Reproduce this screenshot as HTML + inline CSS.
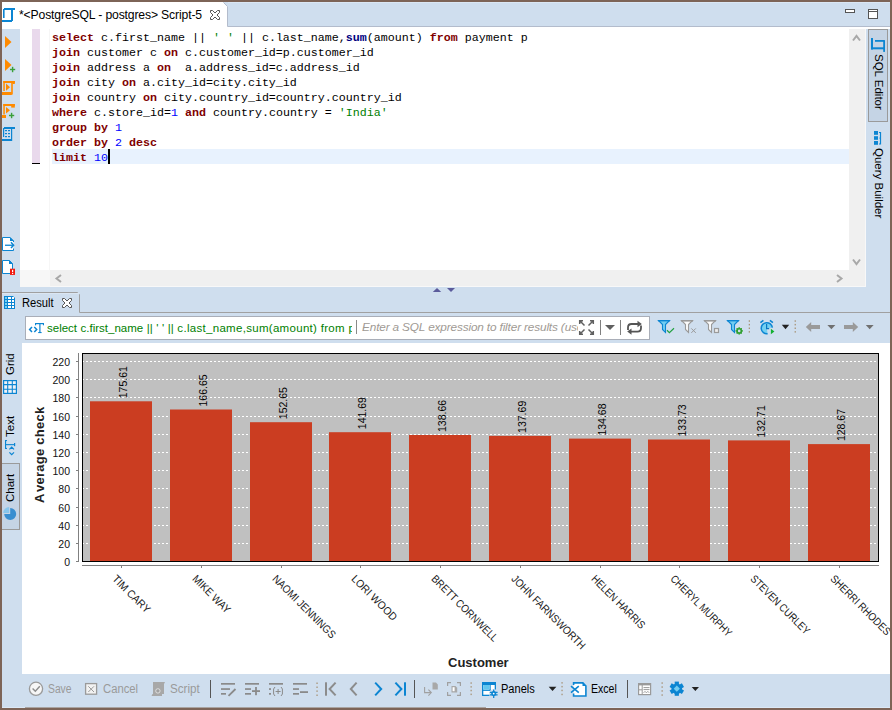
<!DOCTYPE html>
<html><head><meta charset="utf-8">
<style>
*{box-sizing:border-box}
html,body{margin:0;padding:0}
body{width:892px;height:710px;position:relative;overflow:hidden;background:#7d6457;font-family:"Liberation Sans",sans-serif;}
.a{position:absolute}
#win{left:2px;top:2px;width:888px;height:706px;background:#cfdeee}
.code{font-family:"Liberation Mono",monospace;font-size:11.67px;line-height:15px;white-space:pre;color:#000}
.k{color:#800000;font-weight:bold}
.f{color:#000080;font-weight:bold}
.n{color:#0000ff}
.s{color:#008000}
.ui{font-size:11px;color:#000;white-space:pre;line-height:13px}
svg{position:absolute;overflow:visible}
</style></head>
<body>
<div class="a" id="win"></div>

<!-- top editor tab bar -->
<div class="a" style="left:227px;top:26px;width:663px;height:1px;background:#b3bccc"></div>
<div class="a" style="left:228px;top:2px;width:662px;height:1px;background:#dbe7f4"></div>
<div class="a" style="left:2px;top:2px;width:226px;height:27px;background:#fff"></div>
<svg class="a" style="left:0;top:0" width="240" height="30"><polygon points="223,2 229,2 229,8" fill="#cfdeee"/><polyline points="223.5,2.5 227.5,6.5 227.5,26.5 240,26.5" fill="none" stroke="#b3bccc" stroke-width="1"/><rect x="228" y="2" width="12" height="1" fill="#dbe7f4"/></svg>
<div class="a" style="left:2px;top:27px;width:888px;height:2px;background:#fff"></div>
<div class="a ui" style="left:19px;top:8px;font-size:12.2px;line-height:14px;color:#000;letter-spacing:-0.15px">*&lt;PostgreSQL - postgres&gt; Script-5</div>

<!-- editor -->
<div class="a" style="left:20px;top:29px;width:829px;height:241px;background:#fff"></div>
<div class="a" style="left:32px;top:29px;width:8px;height:134px;background:#e9d9ec"></div>
<div class="a" style="left:32px;top:163px;width:8px;height:1px;background:#000"></div>
<div class="a" style="left:49px;top:29px;width:1px;height:241px;background:#f6f6f6"></div>
<div class="a" style="left:52px;top:149px;width:797px;height:15px;background:#e8f2fe"></div>
<div class="a code" style="left:52px;top:31px"><span class="k">select</span> c.first_name || <span class="s">' '</span> || c.last_name,<span class="f">sum</span>(amount) <span class="k">from</span> payment p
<span class="k">join</span> customer c <span class="k">on</span> c.customer_id=p.customer_id
<span class="k">join</span> address a <span class="k">on</span>  a.address_id=c.address_id
<span class="k">join</span> city <span class="k">on</span> a.city_id=city.city_id
<span class="k">join</span> country <span class="k">on</span> city.country_id=country.country_id
<span class="k">where</span> c.store_id=<span class="n">1</span> <span class="k">and</span> country.country = <span class="s">'India'</span>
<span class="k">group</span> <span class="k">by</span> <span class="n">1</span>
<span class="k">order</span> <span class="k">by</span> <span class="n">2</span> <span class="k">desc</span>
<span class="k">limit</span> <span class="n">10</span></div>
<div class="a" style="left:108px;top:149px;width:2px;height:15px;background:#000"></div>
<!-- scrollbars -->
<div class="a" style="left:849px;top:29px;width:17px;height:258px;background:#f0f0f0"></div>
<div class="a" style="left:20px;top:270px;width:829px;height:17px;background:#f0f0f0"></div>
<div class="a" style="left:20px;top:270px;width:30px;height:17px;background:#f7f7f7"></div>
<div class="a" style="left:865px;top:29px;width:1px;height:258px;background:#f8f8f8"></div>
<div class="a" style="left:50px;top:286px;width:816px;height:1px;background:#f8f8f8"></div>

<!-- right vertical tabs -->
<div class="a" style="left:868px;top:29px;width:20px;height:93px;background:#c5d4e5;border:1px solid #9a9a9a"></div>
<div class="a ui" style="left:885px;top:54px;transform-origin:0 0;transform:rotate(90deg);font-size:11.5px">SQL Editor</div>
<div class="a ui" style="left:885px;top:148px;transform-origin:0 0;transform:rotate(90deg);font-size:11.5px">Query Builder</div>

<!-- result tab -->
<svg class="a" style="left:0;top:285px" width="892" height="30"><polyline points="2,7.5 77.5,7.5 79.5,9.5 79.5,27.5 890,27.5" fill="none" stroke="#a0a0a0" stroke-width="1"/><rect x="2" y="8" width="77" height="1" fill="#dbe6f2"/></svg>
<div class="a ui" style="left:22px;top:297px;font-size:12px;transform-origin:0 0;transform:scaleX(0.93)">Result</div>

<!-- filter box -->
<div class="a" style="left:25px;top:316px;width:625px;height:24px;background:#fff;border:1px solid #a9aeb8"></div>
<div class="a ui" style="left:47px;top:321px;font-size:11.5px;line-height:14px;color:#008000;width:305px;overflow:hidden"><span style="word-spacing:0.36px">select c.first_name || ' ' || </span><span style="letter-spacing:0.3px">c.last_name,sum(amount) from payment p</span></div>
<div class="a" style="left:356px;top:320px;width:1px;height:14px;background:#8a8a8a"></div>
<div class="a ui" style="left:362px;top:320px;font-size:11.8px;letter-spacing:-0.15px;line-height:14px;color:#a09a94;font-style:italic;width:216px;overflow:hidden">Enter a SQL expression to filter results (use Ctrl+Space)</div>
<div class="a" style="left:600px;top:320px;width:1px;height:15px;background:#808080"></div>
<div class="a" style="left:620px;top:320px;width:1px;height:15px;background:#808080"></div>

<!-- left vertical tabs -->
<div class="a" style="left:2px;top:463px;width:18px;height:67px;background:#c5d4e5;border:1px solid #9a9a9a;border-left:none"></div>
<div class="a ui" style="left:4px;top:375px;transform-origin:0 0;transform:rotate(-90deg);font-size:11.5px">Grid</div>
<div class="a ui" style="left:4px;top:437px;transform-origin:0 0;transform:rotate(-90deg);font-size:11.5px">Text</div>
<div class="a ui" style="left:4px;top:502px;transform-origin:0 0;transform:rotate(-90deg);font-size:11.5px">Chart</div>

<!-- chart area -->
<div class="a" style="left:22px;top:343px;width:868px;height:331px;background:#fff"></div>
<div id="chart"><svg class="a" style="left:0;top:0" width="892" height="710" viewBox="0 0 892 710"><defs><clipPath id="cc"><rect x="22" y="343" width="868" height="331"/></clipPath></defs><g clip-path="url(#cc)">
<rect x="82.5" y="353.5" width="796" height="208" fill="#c0c0c0"/>
<line x1="82" y1="543.5" x2="878" y2="543.5" stroke="#fff" stroke-width="1" stroke-dasharray="2 2"/>
<line x1="82" y1="525.5" x2="878" y2="525.5" stroke="#fff" stroke-width="1" stroke-dasharray="2 2"/>
<line x1="82" y1="507.5" x2="878" y2="507.5" stroke="#fff" stroke-width="1" stroke-dasharray="2 2"/>
<line x1="82" y1="488.5" x2="878" y2="488.5" stroke="#fff" stroke-width="1" stroke-dasharray="2 2"/>
<line x1="82" y1="470.5" x2="878" y2="470.5" stroke="#fff" stroke-width="1" stroke-dasharray="2 2"/>
<line x1="82" y1="452.5" x2="878" y2="452.5" stroke="#fff" stroke-width="1" stroke-dasharray="2 2"/>
<line x1="82" y1="434.5" x2="878" y2="434.5" stroke="#fff" stroke-width="1" stroke-dasharray="2 2"/>
<line x1="82" y1="416.5" x2="878" y2="416.5" stroke="#fff" stroke-width="1" stroke-dasharray="2 2"/>
<line x1="82" y1="397.5" x2="878" y2="397.5" stroke="#fff" stroke-width="1" stroke-dasharray="2 2"/>
<line x1="82" y1="379.5" x2="878" y2="379.5" stroke="#fff" stroke-width="1" stroke-dasharray="2 2"/>
<line x1="82" y1="361.5" x2="878" y2="361.5" stroke="#fff" stroke-width="1" stroke-dasharray="2 2"/>
<rect x="90" y="401.3" width="62" height="159.7" fill="#cb3d21"/>
<rect x="170" y="409.5" width="62" height="151.5" fill="#cb3d21"/>
<rect x="250" y="422.2" width="62" height="138.8" fill="#cb3d21"/>
<rect x="329" y="432.2" width="62" height="128.8" fill="#cb3d21"/>
<rect x="409" y="435.0" width="62" height="126.0" fill="#cb3d21"/>
<rect x="489" y="435.9" width="62" height="125.1" fill="#cb3d21"/>
<rect x="569" y="438.6" width="62" height="122.4" fill="#cb3d21"/>
<rect x="648" y="439.5" width="62" height="121.5" fill="#cb3d21"/>
<rect x="728" y="440.4" width="62" height="120.6" fill="#cb3d21"/>
<rect x="808" y="444.1" width="62" height="116.9" fill="#cb3d21"/>
<rect x="82.5" y="353.5" width="796" height="208" fill="none" stroke="#000" stroke-width="1"/>
<line x1="78.5" y1="353" x2="78.5" y2="562" stroke="#808080" stroke-width="1"/>
<line x1="76" y1="561.5" x2="78" y2="561.5" stroke="#808080" stroke-width="1"/>
<text x="70" y="566.0" text-anchor="end" font-size="10.5" fill="#111">0</text>
<line x1="76" y1="543.5" x2="78" y2="543.5" stroke="#808080" stroke-width="1"/>
<text x="70" y="548.0" text-anchor="end" font-size="10.5" fill="#111">20</text>
<line x1="76" y1="525.5" x2="78" y2="525.5" stroke="#808080" stroke-width="1"/>
<text x="70" y="530.0" text-anchor="end" font-size="10.5" fill="#111">40</text>
<line x1="76" y1="507.5" x2="78" y2="507.5" stroke="#808080" stroke-width="1"/>
<text x="70" y="512.0" text-anchor="end" font-size="10.5" fill="#111">60</text>
<line x1="76" y1="488.5" x2="78" y2="488.5" stroke="#808080" stroke-width="1"/>
<text x="70" y="493.0" text-anchor="end" font-size="10.5" fill="#111">80</text>
<line x1="76" y1="470.5" x2="78" y2="470.5" stroke="#808080" stroke-width="1"/>
<text x="70" y="475.0" text-anchor="end" font-size="10.5" fill="#111">100</text>
<line x1="76" y1="452.5" x2="78" y2="452.5" stroke="#808080" stroke-width="1"/>
<text x="70" y="457.0" text-anchor="end" font-size="10.5" fill="#111">120</text>
<line x1="76" y1="434.5" x2="78" y2="434.5" stroke="#808080" stroke-width="1"/>
<text x="70" y="439.0" text-anchor="end" font-size="10.5" fill="#111">140</text>
<line x1="76" y1="416.5" x2="78" y2="416.5" stroke="#808080" stroke-width="1"/>
<text x="70" y="421.0" text-anchor="end" font-size="10.5" fill="#111">160</text>
<line x1="76" y1="397.5" x2="78" y2="397.5" stroke="#808080" stroke-width="1"/>
<text x="70" y="402.0" text-anchor="end" font-size="10.5" fill="#111">180</text>
<line x1="76" y1="379.5" x2="78" y2="379.5" stroke="#808080" stroke-width="1"/>
<text x="70" y="384.0" text-anchor="end" font-size="10.5" fill="#111">200</text>
<line x1="76" y1="361.5" x2="78" y2="361.5" stroke="#808080" stroke-width="1"/>
<text x="70" y="366.0" text-anchor="end" font-size="10.5" fill="#111">220</text>
<line x1="82" y1="565.5" x2="879" y2="565.5" stroke="#808080" stroke-width="1"/>
<line x1="121.5" y1="565" x2="121.5" y2="568" stroke="#808080" stroke-width="1"/>
<text transform="translate(111.7,579.5) rotate(45)" font-size="11" fill="#1a1a1a" textLength="48.4" lengthAdjust="spacingAndGlyphs">TIM CARY</text>
<line x1="201.5" y1="565" x2="201.5" y2="568" stroke="#808080" stroke-width="1"/>
<text transform="translate(191.7,579.5) rotate(45)" font-size="11" fill="#1a1a1a" textLength="48.6" lengthAdjust="spacingAndGlyphs">MIKE WAY</text>
<line x1="281.5" y1="565" x2="281.5" y2="568" stroke="#808080" stroke-width="1"/>
<text transform="translate(271.7,579.5) rotate(45)" font-size="11" fill="#1a1a1a" textLength="84.3" lengthAdjust="spacingAndGlyphs">NAOMI JENNINGS</text>
<line x1="360.5" y1="565" x2="360.5" y2="568" stroke="#808080" stroke-width="1"/>
<text transform="translate(350.7,579.5) rotate(45)" font-size="11" fill="#1a1a1a" textLength="59.4" lengthAdjust="spacingAndGlyphs">LORI WOOD</text>
<line x1="440.5" y1="565" x2="440.5" y2="568" stroke="#808080" stroke-width="1"/>
<text transform="translate(430.7,579.5) rotate(45)" font-size="11" fill="#1a1a1a" textLength="88.8" lengthAdjust="spacingAndGlyphs">BRETT CORNWELL</text>
<line x1="520.5" y1="565" x2="520.5" y2="568" stroke="#808080" stroke-width="1"/>
<text transform="translate(510.7,579.5) rotate(45)" font-size="11" fill="#1a1a1a" textLength="99.6" lengthAdjust="spacingAndGlyphs">JOHN FARNSWORTH</text>
<line x1="600.5" y1="565" x2="600.5" y2="568" stroke="#808080" stroke-width="1"/>
<text transform="translate(590.7,579.5) rotate(45)" font-size="11" fill="#1a1a1a" textLength="70.7" lengthAdjust="spacingAndGlyphs">HELEN HARRIS</text>
<line x1="679.5" y1="565" x2="679.5" y2="568" stroke="#808080" stroke-width="1"/>
<text transform="translate(669.7,579.5) rotate(45)" font-size="11" fill="#1a1a1a" textLength="81.9" lengthAdjust="spacingAndGlyphs">CHERYL MURPHY</text>
<line x1="759.5" y1="565" x2="759.5" y2="568" stroke="#808080" stroke-width="1"/>
<text transform="translate(749.7,579.5) rotate(45)" font-size="11" fill="#1a1a1a" textLength="78.7" lengthAdjust="spacingAndGlyphs">STEVEN CURLEY</text>
<line x1="839.5" y1="565" x2="839.5" y2="568" stroke="#808080" stroke-width="1"/>
<text transform="translate(829.7,579.5) rotate(45)" font-size="11" fill="#1a1a1a" textLength="79.9" lengthAdjust="spacingAndGlyphs">SHERRI RHODES</text>
<text transform="translate(127.2,398.3) rotate(-90)" font-size="10.5" fill="#000">175.61</text>
<text transform="translate(206.9,406.5) rotate(-90)" font-size="10.5" fill="#000">166.65</text>
<text transform="translate(286.7,419.2) rotate(-90)" font-size="10.5" fill="#000">152.65</text>
<text transform="translate(366.4,429.2) rotate(-90)" font-size="10.5" fill="#000">141.69</text>
<text transform="translate(446.2,432.0) rotate(-90)" font-size="10.5" fill="#000">138.66</text>
<text transform="translate(526.0,432.9) rotate(-90)" font-size="10.5" fill="#000">137.69</text>
<text transform="translate(605.7,435.6) rotate(-90)" font-size="10.5" fill="#000">134.68</text>
<text transform="translate(685.5,436.5) rotate(-90)" font-size="10.5" fill="#000">133.73</text>
<text transform="translate(765.2,437.4) rotate(-90)" font-size="10.5" fill="#000">132.71</text>
<text transform="translate(845.0,441.1) rotate(-90)" font-size="10.5" fill="#000">128.67</text>
<text transform="translate(44,503) rotate(-90)" font-size="13" font-weight="bold" fill="#222" style="font-kerning:none">A<tspan dx="1.6" letter-spacing="0.25">verage check</tspan></text>
<text x="448" y="667" font-size="13" font-weight="bold" fill="#222">Customer</text>
</g></svg></div>

<!-- bottom toolbar -->
<div class="a" style="left:2px;top:707px;width:23px;height:1px;background:#dce8f5"></div>
<div class="a" style="left:25px;top:707px;width:461px;height:1px;background:#a9a4a2"></div>
<div class="a" style="left:486px;top:707px;width:404px;height:1px;background:#dce8f5"></div>

<div class="a ui" style="left:48px;top:683px;color:#9a9a9a;font-size:12px;transform-origin:0 0;transform:scaleX(0.86)">Save</div>
<div class="a ui" style="left:103px;top:683px;color:#9a9a9a;font-size:12px;transform-origin:0 0;transform:scaleX(0.94)">Cancel</div>
<div class="a ui" style="left:170px;top:683px;color:#9a9a9a;font-size:12px;transform-origin:0 0;transform:scaleX(0.97)">Script</div>
<div class="a ui" style="left:501px;top:683px;font-size:12px;transform-origin:0 0;transform:scaleX(0.92)">Panels</div>
<div class="a ui" style="left:591px;top:683px;font-size:12px;transform-origin:0 0;transform:scaleX(0.88)">Excel</div>

<svg class="a" style="left:0;top:0" width="892" height="710" viewBox="0 0 892 710">
<g fill="#0c85d2"><rect x="4" y="8" width="11" height="2"/><rect x="3" y="9" width="1.6" height="9"/><rect x="11" y="9" width="2" height="12"/><rect x="2" y="20" width="10" height="2"/></g>
<path transform="translate(210,10)" d="M0.5,0.5 H2.5 L5,3 L7.5,0.5 H9.5 V2.5 L7,5 L9.5,7.5 V9.5 H7.5 L5,7 L2.5,9.5 H0.5 V7.5 L3,5 L0.5,2.5 Z" fill="#fff" stroke="#555" stroke-width="1" stroke-linejoin="miter"/>
<rect x="845.5" y="9.5" width="9" height="3" fill="#fff" stroke="#555"/>
<rect x="868.5" y="9.5" width="9" height="9" fill="#fff" stroke="#555"/><line x1="868" y1="11.5" x2="878" y2="11.5" stroke="#555"/>
<polygon points="5,36 11.5,42 5,48" fill="#ff8a00"/>
<polygon points="5,59 11.5,65 5,71" fill="#ff8a00"/>
<rect x="10" y="68.8" width="5.2" height="1.4" fill="#3aa03a"/><rect x="11.9" y="66.8" width="1.4" height="5.4" fill="#3aa03a"/>
<g fill="#ff8a00"><rect x="3.3" y="81" width="11.5" height="2"/><rect x="12.5" y="81" width="2.3" height="3"/><rect x="3.3" y="81" width="1.5" height="10"/><rect x="11.2" y="81" width="1.6" height="13.5"/><rect x="2" y="92" width="9.8" height="3"/><polygon points="6,83.6 10,87.2 6,90.7"/></g>
<g fill="#ff8a00"><rect x="3.3" y="104" width="11.5" height="2"/><rect x="11.2" y="104" width="3.6" height="3.6"/><rect x="3.3" y="104" width="1.5" height="10.5"/><rect x="2" y="115" width="4" height="3"/><polygon points="6,107 10,110.2 6,113.5"/></g>
<rect x="9" y="114.8" width="5.2" height="1.4" fill="#3aa03a"/><rect x="10.9" y="112.8" width="1.4" height="5.4" fill="#3aa03a"/>
<g fill="#0c85d2"><rect x="4" y="127" width="11" height="2"/><rect x="3" y="128" width="1.2" height="9"/><rect x="11" y="128" width="1.2" height="13"/><rect x="2" y="139" width="9.5" height="2"/><rect x="5" y="130" width="2" height="1.2"/><rect x="5" y="133" width="2" height="1.2"/><rect x="5" y="136" width="2" height="1.2"/><rect x="8" y="130" width="2" height="1.2"/><rect x="8" y="133" width="2" height="1.2"/><rect x="8" y="136" width="2" height="1.2"/></g>
<path d="M2.5,237.5 H10 L13.5,241 V250.5 H2.5 Z" fill="#fff" stroke="none"/><path d="M13.5,242 V241 L10,237.5 H2.5 V250.5 H13.5 V248.5" fill="none" stroke="#0c85d2"/><polygon points="10,237 14,241 10,241" fill="#0c85d2"/>
<rect x="5" y="244.6" width="8" height="1.3" fill="#0c85d2"/><polyline points="11,242.3 13.6,245.2 11,248.1" fill="none" stroke="#0c85d2" stroke-width="1.5"/>
<path d="M2.5,260.5 H9.5 L12.5,263.5 V273.5 H2.5 Z" fill="#fff" stroke="#0c85d2"/><polygon points="9,260 13,264 9,264" fill="#0c85d2"/>
<rect x="10" y="268.7" width="5" height="6.2" fill="#f01a10"/><rect x="12" y="269.8" width="1.2" height="2.4" fill="#fff"/><rect x="12" y="273" width="1.2" height="1" fill="#fff"/>
<g fill="none" stroke="#a8a8a8" stroke-width="2"><polyline points="853,40.5 856.5,36 860,40.5"/><polyline points="853,259.5 856.5,264 860,259.5"/><polyline points="61,275 56.5,278.5 61,282"/><polyline points="837,275 841.5,278.5 837,282"/></g>
<polygon points="432.8,292 437,288 441.2,292" fill="#5b5b9b"/><polygon points="447,288 455,288 451,292" fill="#5b5b9b"/>
<g fill="#0c85d2"><rect x="871" y="38" width="2" height="11.5"/><rect x="871" y="47.3" width="14" height="2"/><rect x="883.2" y="40.3" width="1.8" height="11.6"/><rect x="875" y="40" width="9.6" height="1.8"/></g>
<g fill="#0c85d2"><rect x="874" y="131" width="4" height="3.8"/><rect x="874" y="136.2" width="4" height="3.6"/><rect x="874" y="141" width="4" height="3.8"/></g><path d="M879,132.5 H880.5 V144 H879 M880.5,138.2 H879.5" fill="none" stroke="#0c85d2" stroke-width="1.2"/>
<path d="M4,296 H13 L15,298 V309 H4 Z" fill="#0c85d2"/><rect x="5" y="297" width="2" height="2" fill="#74d2f4"/><rect x="8" y="297" width="3" height="2" fill="#fff"/><rect x="12" y="297" width="2" height="2" fill="#fff"/><rect x="5" y="300" width="2" height="2" fill="#74d2f4"/><rect x="8" y="300" width="3" height="2" fill="#fff"/><rect x="12" y="300" width="2" height="2" fill="#fff"/><rect x="5" y="303" width="2" height="2" fill="#74d2f4"/><rect x="8" y="303" width="3" height="2" fill="#fff"/><rect x="12" y="303" width="2" height="2" fill="#fff"/><rect x="5" y="306" width="2" height="2" fill="#74d2f4"/><rect x="8" y="306" width="3" height="2" fill="#fff"/><rect x="12" y="306" width="2" height="2" fill="#fff"/>
<path transform="translate(62,298)" d="M0.5,0.5 H2.5 L5,3 L7.5,0.5 H9.5 V2.5 L7,5 L9.5,7.5 V9.5 H7.5 L5,7 L2.5,9.5 H0.5 V7.5 L3,5 L0.5,2.5 Z" fill="#fff" stroke="#555" stroke-width="1" stroke-linejoin="miter"/>
<g fill="none" stroke="#0c85d2" stroke-width="1.5"><polyline points="32,327 29.6,329.5 32,332"/><polyline points="34.3,327 36.7,329.5 34.3,332"/></g>
<g fill="#0c85d2"><rect x="35" y="323" width="9" height="1.2"/><rect x="35" y="323" width="1.1" height="2.3"/><rect x="42.9" y="323" width="1.1" height="2.3"/><rect x="39.3" y="323" width="1.2" height="10"/><rect x="38.2" y="332" width="3.4" height="1.1"/></g>
<g fill="none" stroke="#606060" stroke-width="1.5"><path d="M579.7,324 V320.7 H583 M580.5,321.5 L584.5,325.5 M590,320.7 H593.3 V324 M592.5,321.5 L588.5,325.5 M579.7,331 V334.3 H583 M580.5,333.5 L584.5,329.5 M593.3,331 V334.3 H590 M592.5,333.5 L588.5,329.5"/></g>
<polygon points="605,325 615,325 610,330" fill="#606060"/>
<g fill="none" stroke="#555" stroke-width="1.8"><path d="M628,330 V327.5 Q628,324 631.5,324 H638.5"/><path d="M641,325.5 V328 Q641,331.6 637.5,331.6 H630.5"/></g><polygon points="637.5,320.8 641.8,324 637.5,327.2" fill="#555"/><polygon points="631.5,328.4 627.2,331.6 631.5,334.8" fill="#555"/>
<path d="M658.5,320.5 H669.5 L665.5,324.5 V332.5 L662.5,329.5 V324.5 Z" fill="#72cdf2" stroke="#0c85d2" stroke-width="1.1"/><rect x="658" y="320" width="12" height="1.4" fill="#0c85d2"/><polyline points="667,330.3 669.4,332.6 674,328.3" fill="none" stroke="#20a040" stroke-width="1.2"/>
<path d="M681.5,320.5 H692.5 L688.5,324.5 V332.5 L685.5,329.5 V324.5 Z" fill="#fbfbfb" stroke="#9a9a9a" stroke-width="1.1"/><rect x="681" y="320" width="12" height="1.6" fill="#9a9a9a"/><path d="M691.3,328.4 L695.8,332.9 M695.8,328.4 L691.3,332.9" stroke="#9a9a9a" stroke-width="1"/>
<path d="M704.5,320.5 H715.5 L711.5,324.5 V332.5 L708.5,329.5 V324.5 Z" fill="#fbfbfb" stroke="#9a9a9a" stroke-width="1.1"/><rect x="704" y="320" width="12" height="1.6" fill="#9a9a9a"/><rect x="714.5" y="328.5" width="4" height="4" fill="#eee" stroke="#9a9a9a" stroke-width="1.2"/>
<path d="M727.5,320.5 H738.5 L734.5,324.5 V332.5 L731.5,329.5 V324.5 Z" fill="#72cdf2" stroke="#0c85d2" stroke-width="1.1"/><rect x="727" y="320" width="12" height="1.4" fill="#0c85d2"/><circle cx="739.2" cy="330.9" r="2.1" fill="none" stroke="#30a030" stroke-width="1.6"/><rect x="741.35" y="330.15" width="1.5" height="1.5" fill="#30a030"/><rect x="740.50" y="332.20" width="1.5" height="1.5" fill="#30a030"/><rect x="738.45" y="333.05" width="1.5" height="1.5" fill="#30a030"/><rect x="736.40" y="332.20" width="1.5" height="1.5" fill="#30a030"/><rect x="735.55" y="330.15" width="1.5" height="1.5" fill="#30a030"/><rect x="736.40" y="328.10" width="1.5" height="1.5" fill="#30a030"/><rect x="738.45" y="327.25" width="1.5" height="1.5" fill="#30a030"/><rect x="740.50" y="328.10" width="1.5" height="1.5" fill="#30a030"/>
<rect x="748.6999999999999" y="320.3" width="1.3" height="1.5" fill="#a8957a"/><rect x="748.6999999999999" y="323.90000000000003" width="1.3" height="1.5" fill="#a8957a"/><rect x="748.6999999999999" y="327.5" width="1.3" height="1.5" fill="#a8957a"/><rect x="748.6999999999999" y="331.1" width="1.3" height="1.5" fill="#a8957a"/>
<rect x="794.6" y="320.3" width="1.3" height="1.5" fill="#a8957a"/><rect x="794.6" y="323.90000000000003" width="1.3" height="1.5" fill="#a8957a"/><rect x="794.6" y="327.5" width="1.3" height="1.5" fill="#a8957a"/><rect x="794.6" y="331.1" width="1.3" height="1.5" fill="#a8957a"/>
<path d="M766.8,328.2 L772.4,327.6 A5.6,5.6 0 1 0 767.6,333.8 Z" fill="#74d0f2"/><path d="M772.4,327.6 A5.6,5.6 0 1 0 767.6,333.8" fill="none" stroke="#0c85d2" stroke-width="1.5"/><path d="M760.4,322.6 L763.4,320.3 M769.9,320.3 L772.9,322.6" fill="none" stroke="#0c85d2" stroke-width="1.6"/><polyline points="766.6,324 766.6,328.6 769.2,328.6" fill="none" stroke="#0a76c0" stroke-width="1.2"/><polygon points="770.9,328.8 774.4,331.5 770.9,334.3" fill="#12b030"/>
<polygon points="781.8,324.8 789.2,324.8 785.5,329.2" fill="#222"/>
<g fill="#9a9a9a"><polygon points="805.8,327 811.2,322 811.2,332"/><rect x="810.5" y="325" width="9.5" height="4"/><polygon points="858.2,327 852.8,322 852.8,332"/><rect x="844" y="325" width="9.5" height="4"/></g>
<g fill="#707070"><polygon points="827.4,325 835.4,325 831.4,329.2"/><polygon points="865.8,325 873.6,325 869.7,329.2"/></g>
<rect x="3.6" y="380.6" width="12.8" height="12.8" fill="#eef2f7" stroke="#0c85d2" stroke-width="1.2"/><path d="M7.7,380 V394 M12.3,380 V394 M3,384.6 H17 M3,389.3 H17" stroke="#0c85d2" stroke-width="1.1"/>
<g fill="#0c85d2"><rect x="5" y="440" width="1.1" height="9"/><rect x="5" y="440" width="2" height="1.1"/><rect x="5" y="447.9" width="2" height="1.1"/><rect x="5" y="444.1" width="10" height="1.1"/><rect x="14" y="443" width="1.2" height="3.2"/></g><g fill="none" stroke="#0c85d2" stroke-width="1.2"><polyline points="9.4,449.4 11.7,447.2 14,449.4"/><polyline points="9.4,452.3 11.7,454.6 14,452.3"/></g>
<path d="M10.2,508 A6,6 0 1 1 4.2,514 H10.2 Z" fill="#3a8fd0"/><path d="M9.2,507 V513 H3.2 A6,6 0 0 1 9.2,507 Z" fill="#88c6ec"/>
<circle cx="36" cy="688.8" r="6.6" fill="#f6f6f6" stroke="#9a9a9a" stroke-width="1.3"/><polyline points="32.6,688.6 35.3,691.3 39.8,686.2" fill="none" stroke="#8c8c8c" stroke-width="1.4"/>
<rect x="85.6" y="683.6" width="11" height="10.6" fill="#f2f2f2" stroke="#9a9a9a" stroke-width="1.3"/><path d="M88.3,686.3 L94,692 M94,686.3 L88.3,692" stroke="#9a9a9a" stroke-width="1"/>
<path d="M153,682 H165 L164,684 V694 H162 V696 H151.5 L152.5,694 H153 Z" fill="#a8a8a8"/><circle cx="157.9" cy="690.9" r="2.2" fill="#a0a0a0" stroke="#e4e4e4" stroke-width="0.9"/>
<rect x="221" y="683" width="14" height="1.7" fill="#8a8a8a"/><rect x="221" y="688.2" width="9" height="1.7" fill="#8a8a8a"/><rect x="221" y="693" width="5" height="1.7" fill="#8a8a8a"/><line x1="228.5" y1="695.8" x2="235.5" y2="689" stroke="#8a8a8a" stroke-width="1.8"/>
<rect x="245" y="683" width="14" height="1.7" fill="#8a8a8a"/><rect x="245" y="688.2" width="6" height="1.7" fill="#8a8a8a"/><rect x="245" y="693" width="6" height="1.7" fill="#8a8a8a"/><rect x="252" y="690.2" width="8" height="1.8" fill="#8a8a8a"/><rect x="255.1" y="687" width="1.8" height="8.2" fill="#8a8a8a"/>
<rect x="269" y="683" width="14" height="1.7" fill="#8a8a8a"/><rect x="269" y="688.2" width="2" height="1.7" fill="#8a8a8a"/><rect x="269" y="693" width="2" height="1.7" fill="#8a8a8a"/><g fill="none" stroke="#8a8a8a" stroke-width="1"><polyline points="275,687 273.6,689 273.6,694 275,696"/><polyline points="281,687 282.4,689 282.4,694 281,696"/></g><rect x="275.6" y="691" width="5" height="1" fill="#8a8a8a"/><rect x="277.6" y="689" width="1" height="5" fill="#8a8a8a"/>
<rect x="293" y="683" width="14" height="1.7" fill="#8a8a8a"/><rect x="293" y="688.2" width="6" height="1.7" fill="#8a8a8a"/><rect x="293" y="693" width="6" height="1.7" fill="#8a8a8a"/><rect x="300" y="691.2" width="8" height="1.8" fill="#8a8a8a"/>
<rect x="316.4" y="682.5" width="1.3" height="1.5" fill="#a8957a"/><rect x="316.4" y="686.5" width="1.3" height="1.5" fill="#a8957a"/><rect x="316.4" y="690.4" width="1.3" height="1.5" fill="#a8957a"/><rect x="316.4" y="694.5" width="1.3" height="1.5" fill="#a8957a"/>
<rect x="325" y="682.3" width="2" height="13.4" fill="#8c8c8c"/><g fill="none" stroke-width="2"><polyline points="335.6,682.6 329.6,689 335.6,695.4" stroke="#8c8c8c"/><polyline points="356.6,682.6 350.8,689 356.6,695.4" stroke="#8c8c8c"/><polyline points="375.2,682.6 381.2,689 375.2,695.4" stroke="#0c85d2"/><polyline points="395.4,682.6 401.4,689 395.4,695.4" stroke="#0c85d2"/></g><rect x="404" y="682.3" width="2" height="13.4" fill="#0c85d2"/>
<g fill="none" stroke="#a0a0a0" stroke-width="1.1"><polyline points="424.6,687 424.6,692.6 431,692.6"/><polyline points="428.4,689.6 431.3,692.6 428.4,695.6"/></g><path d="M432.5,682.6 H436 L437.8,684.4 V689.4 H432.5 Z" fill="#a8a8a8"/>
<g fill="none" stroke="#a0a0a0" stroke-width="1.2"><path d="M447.6,686 V682.6 H451 M457,682.6 H460.4 V686 M447.6,692 V695.4 H451 M457,695.4 H460.4 V692"/></g><path d="M451.5,686 H455.5 L457.2,687.7 V692.5 H451.5 Z" fill="#a8a8a8"/><rect x="452.6" y="687.2" width="2" height="4" fill="#fff"/>
<rect x="470.5" y="682.3" width="1.3" height="1.5" fill="#a8957a"/><rect x="470.5" y="686.0999999999999" width="1.3" height="1.5" fill="#a8957a"/><rect x="470.5" y="689.8" width="1.3" height="1.5" fill="#a8957a"/><rect x="470.5" y="693.5999999999999" width="1.3" height="1.5" fill="#a8957a"/>
<rect x="483" y="684" width="12" height="11" fill="#fff"/><rect x="482" y="682" width="14" height="3" fill="#0c85d2"/><rect x="482" y="682" width="1.3" height="14" fill="#0c85d2"/><rect x="482" y="694.7" width="7.5" height="1.3" fill="#0c85d2"/><rect x="494.7" y="682" width="1.3" height="7.8" fill="#0c85d2"/><rect x="489.5" y="685" width="1.2" height="5.5" fill="#0c85d2"/><rect x="482" y="689.6" width="8.5" height="1.3" fill="#0c85d2"/><rect x="483.3" y="685" width="6.2" height="4.6" fill="#62c6ee"/><circle cx="493.7" cy="693.6" r="4.4" fill="#cfdeee"/><circle cx="493.7" cy="693.6" r="2.5" fill="#0c85d2"/><path d="M493.7,689.4 V697.9 M489.8,692.4 H497.6 M489.8,694.8 H497.6" stroke="#0c85d2" stroke-width="1.3"/><circle cx="493.7" cy="693.6" r="0.9" fill="#fff"/>
<polygon points="548.7,686.7 556.4,686.7 552.5,691" fill="#222"/>
<rect x="561.4" y="682.0999999999999" width="1.3" height="1.5" fill="#a8957a"/><rect x="561.4" y="685.9" width="1.3" height="1.5" fill="#a8957a"/><rect x="561.4" y="689.6999999999999" width="1.3" height="1.5" fill="#a8957a"/><rect x="561.4" y="693.6999999999999" width="1.3" height="1.5" fill="#a8957a"/>
<path d="M573.6,682.9 H582.8 L585.9,686 V696 H573.6 Z" fill="#fff"/><path d="M573.6,685 V682.9 H582.8 L585.9,686 V696 H573.6 V693.5" fill="none" stroke="#0c85d2" stroke-width="1.6"/><polygon points="582.5,682 586.5,686 582.5,686" fill="#0c85d2"/><path d="M571,686.2 L578.8,692.6 M578.8,686.2 L571,692.6" stroke="#0c85d2" stroke-width="1.6"/>
<rect x="638.6" y="683.6" width="12" height="11" fill="#fff" stroke="#9a9a9a" stroke-width="1.2"/><rect x="638" y="683" width="13" height="2.4" fill="#9a9a9a"/><path d="M642.2,685 V695 M638,689.8 H642.2 M643.5,687.6 H649.5 M643.5,689.6 H649.5 M643.6,692.8 L645,691.4 L646.4,692.8 L647.8,691.4 L649.2,692.8" stroke="#9a9a9a" stroke-width="1" fill="none"/>
<rect x="661.5" y="682.3" width="1.3" height="1.5" fill="#a8957a"/><rect x="661.5" y="686.3" width="1.3" height="1.5" fill="#a8957a"/><rect x="661.5" y="690.1999999999999" width="1.3" height="1.5" fill="#a8957a"/><rect x="661.5" y="694.3" width="1.3" height="1.5" fill="#a8957a"/>
<circle cx="676.8" cy="688.7" r="5.3" fill="#0c85d2"/><rect x="674.70" y="692.40" width="4.2" height="3.4" fill="#0c85d2" transform="rotate(0 676.80 694.10)"/><rect x="670.02" y="689.70" width="4.2" height="3.4" fill="#0c85d2" transform="rotate(60 672.12 691.40)"/><rect x="670.02" y="684.30" width="4.2" height="3.4" fill="#0c85d2" transform="rotate(120 672.12 686.00)"/><rect x="674.70" y="681.60" width="4.2" height="3.4" fill="#0c85d2" transform="rotate(180 676.80 683.30)"/><rect x="679.38" y="684.30" width="4.2" height="3.4" fill="#0c85d2" transform="rotate(240 681.48 686.00)"/><rect x="679.38" y="689.70" width="4.2" height="3.4" fill="#0c85d2" transform="rotate(300 681.48 691.40)"/><polygon points="676.8,685.6 679.9,688.7 676.8,691.8 673.7,688.7" fill="#74cdf2"/>
<polygon points="691.7,687 699,687 695.35,691" fill="#222"/>
<g fill="#555"><rect x="210" y="680" width="1" height="18"/><rect x="414" y="680" width="1" height="18"/><rect x="627" y="680" width="1" height="18"/></g>
</svg>
</body></html>
